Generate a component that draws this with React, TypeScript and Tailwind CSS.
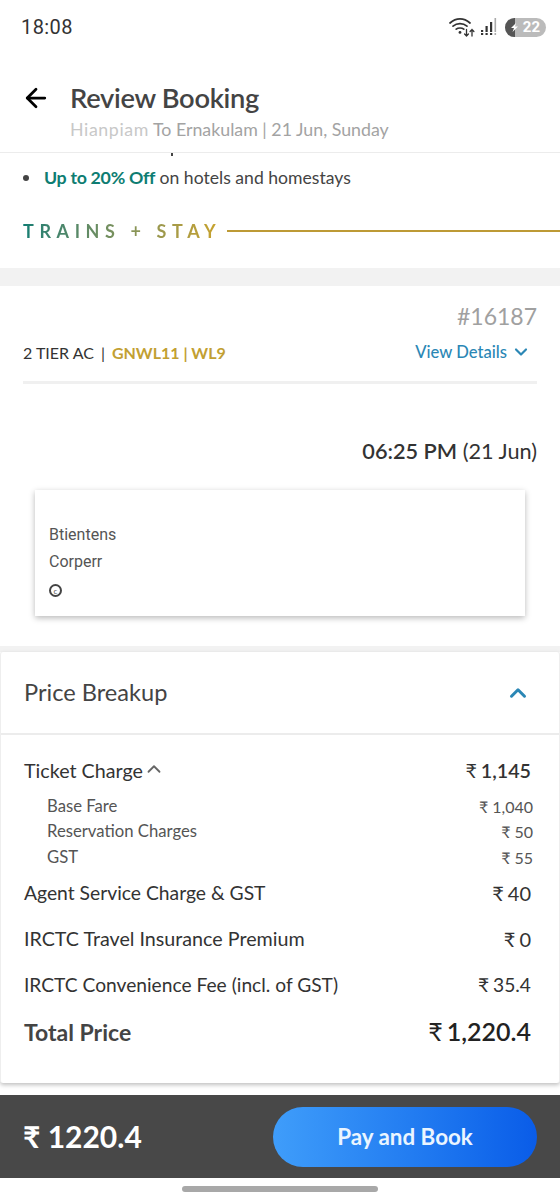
import React from 'react';
import { ArrowLeft, ChevronDown, ChevronUp } from 'lucide-react';

const rows = [
	{ label: 'Base Fare', value: '1,040', h: 'h-[25px]' },
	{ label: 'Reservation Charges', value: '50', h: 'h-[26px]' },
	{ label: 'GST', value: '55', h: 'h-[25px]' },
];

const Rupee = () => <span className="mr-[4px] font-normal">₹</span>;

const StatusIcons = () => (
	<div className="flex items-center">
		<svg width="26" height="20" viewBox="0 0 26 20" fill="none" stroke="#333" strokeLinecap="round">
			<path d="M1 6C7 0.5 15 0.5 21 6" strokeWidth="1.7" />
			<path d="M4 9.2C8 5.8 14 5.8 18 9.2" strokeWidth="1.7" />
			<path d="M7.2 12.2C9.2 10.6 12.8 10.6 14.8 12.2" strokeWidth="1.7" />
			<circle cx="11" cy="15.4" r="1.4" fill="#333" stroke="none" />
			<path d="M17.5 12.5v6.5M15.6 17l1.9 2 1.9-2" strokeWidth="1.3" />
			<path d="M23 19v-6.5M21.1 14.5l1.9-2 1.9 2" strokeWidth="1.3" />
		</svg>
		<svg className="ml-[6px]" width="16" height="18" viewBox="0 0 16 18" fill="#333">
			<rect x="0" y="12" width="2.2" height="2" />
			<rect x="0" y="15" width="2.2" height="2" />
			<rect x="4.5" y="8" width="2.2" height="6" />
			<rect x="4.5" y="15" width="2.2" height="2" />
			<rect x="9" y="4" width="2.2" height="10" />
			<rect x="9" y="15" width="2.2" height="2" />
			<rect x="13.5" y="0" width="1.6" height="14" fill="#aaa" />
			<rect x="13.5" y="15" width="1.6" height="2" fill="#aaa" />
		</svg>
		<div className="relative ml-[8px] flex h-[19px] w-[41px] items-center justify-end overflow-hidden rounded-full bg-[#bbbbbb] pr-[6px] font-['Roboto',sans-serif] text-[15px] font-bold leading-none text-white">
			<div className="absolute left-0 top-0 h-full w-[10px] bg-[#555]" />
			<svg className="absolute left-[5px] top-[5px]" width="9" height="9" viewBox="0 0 9 9" fill="#fff">
				<path d="M6 0L1 5h3L2.5 9 8 3.5H5z" />
			</svg>
			<span className="relative">22</span>
		</div>
	</div>
);

const App = () => {
	return (
		<div className="flex h-[1200px] w-[560px] flex-col overflow-hidden bg-white font-['Lato',sans-serif] text-[#333]">
			<div className="flex h-[54px] shrink-0 items-center justify-between pl-[21px] pr-[14px]">
				<span className="font-['Roboto',sans-serif] text-[20px] leading-none tracking-[0.4px] text-[#333]">18:08</span>
				<StatusIcons />
			</div>

			<header className="flex h-[99px] shrink-0 border-b border-[#ececec] pl-[21px] pt-[27px]">
				<ArrowLeft className="mt-[2px] h-[30px] w-[30px] shrink-0 text-black" strokeWidth={2.2} />
				<div className="ml-[19px]">
					<h1 className="text-[27.3px] font-semibold leading-[34px] tracking-[-0.3px] text-[#444]">Review Booking</h1>
					<p className="mt-[3px] text-[17.8px] leading-[22px] text-[#a3a3a3]">
						<span className="tracking-[0.6px] text-[#c8c8c8]">Hianpiam</span> To Ernakulam | 21 Jun, Sunday
					</p>
				</div>
			</header>

			<div className="flex h-[115px] shrink-0 flex-col px-[23px]">
				<div className="ml-[148px] h-[3px] w-[2px] shrink-0 bg-[#444]" />
				<div className="flex h-[43px] shrink-0 items-center">
					<span className="h-[6px] w-[6px] rounded-full bg-[#444]" />
					<p className="ml-[15px] text-[17.6px] leading-none text-[#444]">
						<span className="text-[17.8px] font-bold tracking-[-0.3px] text-[#0e7d72]">Up to 20% Off</span> on hotels and homestays
					</p>
				</div>
				<div className="-mr-[23px] mt-[20px] flex items-center">
					<span className="whitespace-nowrap bg-gradient-to-r from-[#0e7d72] to-[#c9a227] bg-clip-text text-[18px] font-bold leading-[24px] tracking-[5.6px] text-transparent">TRAINS + STAY</span>
					<div className="ml-[6px] h-[2px] flex-1 bg-[#bd9a35]" />
				</div>
			</div>

			<div className="h-[18px] shrink-0 bg-[#f2f2f2]" />

			<section className="flex h-[360px] shrink-0 flex-col px-[23px]">
				<div className="mt-[15px] text-right text-[23px] leading-[30px] text-[#a0a0a0]">#16187</div>
				<div className="mt-[8px] flex items-center justify-between">
					<div className="flex items-center pt-[2px] text-[16px] leading-[24px] text-[#333]">
						<span>2 TIER AC</span>
						<span className="mx-[7px]">|</span>
						<span className="font-bold text-[#c2a032]">GNWL11 | WL9</span>
					</div>
					<div className="flex items-center pr-[6px] text-[16.6px] font-medium leading-[24px] text-[#2b87b5]">
						View Details
						<ChevronDown className="ml-[4px] h-[20px] w-[20px]" strokeWidth={2.6} />
					</div>
				</div>
				<div className="mt-[16px] h-[3px] bg-[#f0f0f0]" />
				<div className="mt-[52px] text-right text-[21.7px] leading-[30px] text-[#333]">
					<span className="font-semibold">06:25 PM</span> (21 Jun)
				</div>
				<div className="mx-[12px] mt-[24px] flex h-[126px] flex-col justify-end bg-white pb-[12px] pl-[14px] text-[16px] text-[#555] shadow-[0_2px_6px_rgba(0,0,0,0.28)]">
					<div className="font-['Roboto',sans-serif] leading-[27px]">Btientens</div>
					<div className="font-['Roboto',sans-serif] leading-[27px]">Corperr</div>
					<div className="mt-[2px] flex h-[27px] items-center">
						<span className="flex h-[13px] w-[13px] items-center justify-center rounded-full border-2 border-[#444] text-[8px] leading-none">c</span>
					</div>
				</div>
			</section>

			<div className="h-[6px] shrink-0 bg-[#f2f2f2]" />

			<section className="flex h-[431px] shrink-0 flex-col rounded-[3px] border-x border-[#eeeeee] bg-white shadow-[0_2px_4px_rgba(0,0,0,0.25)]">
				<div className="flex h-[83px] shrink-0 items-center justify-between border-b-2 border-[#ececec] pl-[23px] pr-[28px]">
					<h2 className="text-[23.6px] leading-none text-[#444]">Price Breakup</h2>
					<ChevronUp className="h-[26px] w-[26px] text-[#2b87b5]" strokeWidth={2.8} />
				</div>
				<div className="flex flex-col pl-[23px] pr-[28px]">
					<div className="mt-[20px] flex h-[32px] items-center justify-between text-[19.7px] text-[#333]">
						<div className="flex items-center">
							Ticket Charge
							<ChevronUp className="-mt-[3px] h-[22px] w-[22px] text-[#666]" strokeWidth={2} />
						</div>
						<span className="font-semibold"><Rupee />1,145</span>
					</div>
					<div className="mt-[7px] flex flex-col">
						{rows.map((row) => (
							<div key={row.label} className={`-mr-[2px] flex ${row.h} items-center justify-between pl-[23px] text-[16.7px] text-[#555]`}>
								<span>{row.label}</span>
								<span className="text-[16px]"><Rupee />{row.value}</span>
							</div>
						))}
					</div>
					<div className="mt-[7px] flex h-[32px] items-center justify-between text-[19.3px] text-[#333]">
						<span>Agent Service Charge &amp; GST</span>
						<span className="text-[20px]"><Rupee />40</span>
					</div>
					<div className="mt-[14px] flex h-[32px] items-center justify-between text-[19.7px] text-[#333]">
						<span>IRCTC Travel Insurance Premium</span>
						<span className="text-[20px]"><Rupee />0</span>
					</div>
					<div className="mt-[14px] flex h-[32px] items-center justify-between text-[19.2px] text-[#333]">
						<span>IRCTC Convenience Fee (incl. of GST)</span>
						<span><Rupee />35.4</span>
					</div>
					<div className="mt-[13px] flex h-[36px] items-center justify-between">
						<span className="text-[23px] font-bold text-[#444]">Total Price</span>
						<span className="text-[25px] font-semibold text-[#222]"><Rupee />1,220.4</span>
					</div>
				</div>
			</section>

			<div className="h-[12px] shrink-0" />

			<div className="flex h-[83px] shrink-0 items-center justify-between bg-[#484848] px-[23px]">
				<span className="text-[30px] font-bold text-white">₹ 1220.4</span>
				<button className="flex h-[60px] w-[264px] items-center justify-center rounded-full bg-gradient-to-r from-[#3f9dfa] to-[#0a5ce8] text-[22.4px] font-bold text-[#eaf5ff]">
					Pay and Book
				</button>
			</div>

			<div className="flex flex-1 items-center justify-center">
				<div className="mb-[1px] h-[6px] w-[196px] rounded-full bg-[#a8a8a8]" />
			</div>
		</div>
	);
};

export default App;
